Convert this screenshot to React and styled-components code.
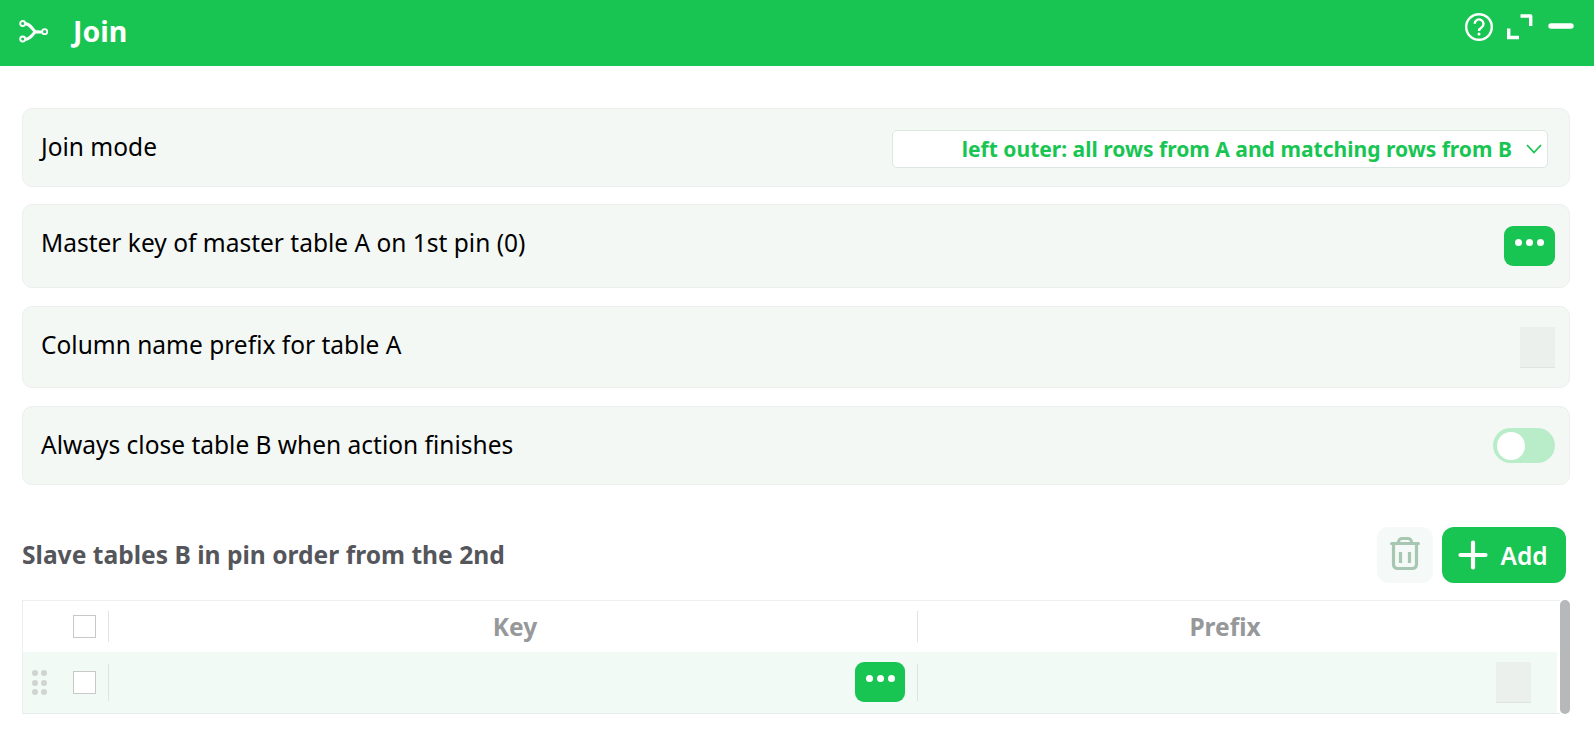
import React from "react";
import styled, { createGlobalStyle } from "styled-components";

const Global = createGlobalStyle`
  html, body { margin: 0; padding: 0; background: #fff; overflow: hidden; }
  body { font-family: "Noto Sans", sans-serif; color: #000; }
`;
const Page = styled.div`width: 1594px; height: 736px; overflow: hidden; display: flex; flex-direction: column;`;
const Header = styled.header`
  height: 66px; flex: none; background: #19c552; color: #fff; display: flex; align-items: flex-start;
  padding: 0 20px 0 19px; box-sizing: border-box;
`;
const Title = styled.h1`margin: 12px 0 0 24px; font-size: 28.5px; line-height: 38px; font-weight: 700;`;
const LogoSvg = styled.svg`margin-top: 20px;`;
const HeaderIcons = styled.div`margin-left: auto; display: flex; align-items: flex-start; gap: 12px; padding-top: 12px;`;
const MinimizeSvg = styled.svg`margin-left: 2px;`;
const Content = styled.main`padding: 42px 24px 0 22px; display: flex; flex-direction: column;`;
const Panel = styled.section`
  height: ${p => p.$h}px; margin-bottom: ${p => p.$mb}px; box-sizing: border-box;
  background: #f4f8f5; border: 1px solid #ebefed; border-radius: 10px;
  display: flex; align-items: center; justify-content: space-between; padding: 0 14px 0 18px;
`;
const Label = styled.span`font-size: 24.5px; line-height: 32px; padding-bottom: ${p => p.$lift || 0}px;`;
const Select = styled.div`
  width: 656px; height: 38px; margin: 2px 7px 0 0; box-sizing: border-box; background: #fff; border: 1px solid #dde7e2; border-radius: 5px;
  display: flex; align-items: center; justify-content: flex-end; padding-right: 5px; gap: 14px;
  color: #19c552; font-size: 21.05px; font-weight: 700;
`;
const DotsButton = styled.button`
  width: ${p => p.$w}px; height: 40px; flex: none; border: none; padding: 0 0 7px; border-radius: 9px; background: #19c552;
  display: flex; align-items: center; justify-content: center; gap: 4px;
`;
const Dot = styled.i`width: 7px; height: 7px; border-radius: 50%; background: #fff; display: block;`;
const EmptyInput = styled.div`
  width: 35px; height: 41px; margin-top: 1px; box-sizing: border-box; background: #ebf0ed; border-bottom: 1px solid #dde5e1; flex: none;
`;
const Toggle = styled.div`
  width: 62px; height: 35px; border-radius: 18px; background: #b9edc9; display: flex; align-items: center; padding-left: 4px; box-sizing: border-box;
`;
const Thumb = styled.div`width: 28px; height: 28px; border-radius: 50%; background: #fff;`;
const SectionBar = styled.div`
  display: flex; align-items: center; justify-content: space-between; height: 56px; margin-top: 42px; padding-right: 4px; margin-bottom: 17px;
`;
const SectionTitle = styled.h2`margin: 0 0 2px; font-size: 24.6px; font-weight: 700; color: #54565b;`;
const Actions = styled.div`display: flex; gap: 9px;`;
const TrashButton = styled.button`
  width: 56px; height: 56px; border: none; padding: 0; border-radius: 11px; background: #f5f9f7; display: flex; align-items: center; justify-content: center;
`;
const AddButton = styled.button`
  width: 124px; height: 56px; border: none; padding: 0 2px 0 0; border-radius: 12px; background: #19c552; color: #fff; display: flex; align-items: center; justify-content: center; gap: 12px;
  font: 600 24.5px "Noto Sans", sans-serif;
`;
const TableContent = styled(Content)`padding-top: 0;`;
const TableWrap = styled.div`display: flex; height: 114px;`;
const Table = styled.div`
  width: 1538px; box-sizing: border-box; border: 1px solid #ebefed; border-right: none; border-bottom-color: #e6ecea; display: flex; flex-direction: column;
`;
const Row = styled.div`
  display: grid; grid-template-columns: 50px 35px 1px 808px 1px 1fr; align-items: center;
  height: ${p => p.$h}px; margin-right: 3px; background: ${p => p.$bg};
`;
const Grip = styled.div`display: grid; grid-template-columns: 6px 6px; gap: 3.3px; justify-content: start; padding: 1px 0 0 9px;`;
const GripDot = styled.i`width: 6px; height: 6px; border-radius: 50%; background: #d0d5d4; display: block;`;
const Check = styled.div`width: 23px; height: 23px; box-sizing: border-box; border: 1px solid #c8c8c8; background: #fff; grid-column: 2;`;
const Sep = styled.div`width: 1px; height: ${p => p.$h}px; background: #dde5e2;`;
const HeadCell = styled.div`
  text-align: center; font-size: 24.5px; font-weight: 700; color: #96989a;
  padding: 1px ${p => p.$pr || 0}px 0 ${p => p.$pl || 0}px;
`;
const Cell = styled.div`display: flex; justify-content: flex-end; align-items: center; padding-right: ${p => p.$pr}px;`;
const Scrollbar = styled.div`width: 10px; background: #b6b8ba; border-radius: 5px; flex: none;`;

const Dots = ({ w }) => (
  <DotsButton $w={w}><Dot /><Dot /><Dot /></DotsButton>
);

export default function App() {
  return (
    <Page>
      <Global />
      <Header>
        <LogoSvg width="30" height="24" viewBox="0 0 30 24" fill="none" stroke="#fff">
          <path d="M6 3.500 Q10 4 13 8 L16 11.500 Q17.500 12 24 12 M6 19.500 Q10 19 13 15.500 L16 12" strokeWidth="3" />
          <circle cx="3.700" cy="3.500" r="2.500" strokeWidth="1.800" />
          <circle cx="3.700" cy="19" r="2.500" strokeWidth="1.800" />
          <circle cx="25.700" cy="11.700" r="2.500" strokeWidth="1.800" />
        </LogoSvg>
        <Title>Join</Title>
        <HeaderIcons>
          <svg width="30" height="30" viewBox="0 0 30 30" fill="none" stroke="#fff">
            <circle cx="15" cy="15" r="12.800" strokeWidth="2.400" />
            <path d="M10.700 11.800 a4.400 4.400 0 1 1 6.800 3.700 c-1.600 1-2.500 1.700-2.500 3.400" strokeWidth="2.400" />
            <circle cx="15" cy="22" r="1.500" fill="#fff" stroke="none" />
          </svg>
          <svg width="28" height="28" viewBox="0 0 28 28" fill="none" stroke="#fff" strokeWidth="3.400">
            <path d="M14.500 4 H24.700 V14" strokeLinejoin="round" />
            <path d="M2.700 16.500 V25.500 H13" />
          </svg>
          <MinimizeSvg width="26" height="28" viewBox="0 0 26 28" fill="none" stroke="#fff" strokeWidth="5.400" strokeLinecap="round">
            <path d="M3 14 H23" />
          </MinimizeSvg>
        </HeaderIcons>
      </Header>
      <Content>
        <Panel $h={79} $mb={17}>
          <Label $lift={2}>Join mode</Label>
          <Select>
            left outer: all rows from A and matching rows from B
            <svg width="16" height="10" viewBox="0 0 16 10" fill="none" stroke="#19c552" strokeWidth="1.800"><path d="M1 1 L8 8.500 L15 1" /></svg>
          </Select>
        </Panel>
        <Panel $h={84} $mb={18}>
          <Label $lift={6}>Master key of master table A on 1st pin (0)</Label>
          <Dots w={51} />
        </Panel>
        <Panel $h={82} $mb={18}>
          <Label $lift={4}>Column name prefix for table A</Label>
          <EmptyInput />
        </Panel>
        <Panel $h={79} $mb={0}>
          <Label $lift={2}>Always close table B when action finishes</Label>
          <Toggle><Thumb /></Toggle>
        </Panel>
        <SectionBar>
          <SectionTitle>Slave tables B in pin order from the 2nd</SectionTitle>
          <Actions>
            <TrashButton>
              <svg width="34" height="36" viewBox="0 0 34 36" fill="none" stroke="#a8c7b3" strokeWidth="3">
                <path d="M3.500 6.500 H30.500" strokeLinecap="round" />
                <path d="M10.500 6 V5 a3.500 3.500 0 0 1 3.500-3.500 h6 a3.500 3.500 0 0 1 3.500 3.500 V6" />
                <path d="M5.500 8 V27.500 a4 4 0 0 0 4 4 H24.500 a4 4 0 0 0 4-4 V8" strokeWidth="3.200" />
                <path d="M12.500 15 V26 M21.500 15 V26" strokeWidth="3.200" />
              </svg>
            </TrashButton>
            <AddButton>
              <svg width="30" height="30" viewBox="0 0 30 30" fill="none" stroke="#fff" strokeWidth="4.200" strokeLinecap="round"><path d="M15 2.500 V27.500 M2.500 15 H27.500" /></svg>
              Add
            </AddButton>
          </Actions>
        </SectionBar>
      </Content>
      <TableContent>
        <TableWrap>
          <Table>
            <Row $h={51} $bg="#fff">
              <span />
              <Check />
              <Sep $h={31} />
              <HeadCell $pl={4}>Key</HeadCell>
              <Sep $h={31} />
              <HeadCell $pr={25}>Prefix</HeadCell>
            </Row>
            <Row $h={62} $bg="#f1faf5">
              <Grip><GripDot /><GripDot /><GripDot /><GripDot /><GripDot /><GripDot /></Grip>
              <Check />
              <Sep $h={37} />
              <Cell $pr={12}><Dots w={50} /></Cell>
              <Sep $h={37} />
              <Cell $pr={26}><EmptyInput /></Cell>
            </Row>
          </Table>
          <Scrollbar />
        </TableWrap>
      </TableContent>
    </Page>
  );
}
